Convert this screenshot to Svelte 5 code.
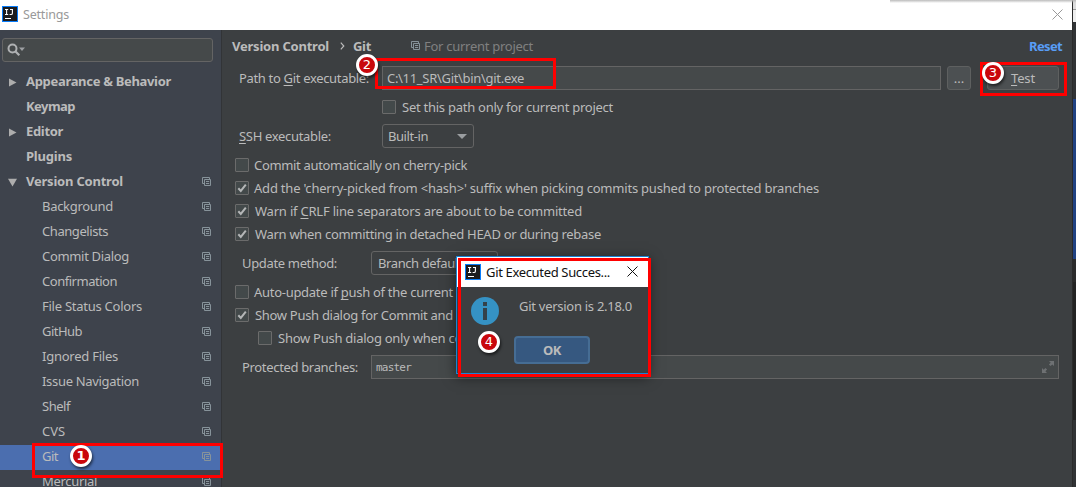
<script>
  const tree = [
    { label: 'Appearance & Behavior', w: 145, top: true, arrow: 'right' },
    { label: 'Keymap', w: 49, top: true },
    { label: 'Editor', w: 37, top: true, arrow: 'right' },
    { label: 'Plugins', w: 46, top: true },
    { label: 'Version Control', w: 97, top: true, arrow: 'down', copy: true },
    { label: 'Background', w: 71, copy: true },
    { label: 'Changelists', w: 66, copy: true },
    { label: 'Commit Dialog', w: 87, copy: true },
    { label: 'Confirmation', w: 75, copy: true },
    { label: 'File Status Colors', w: 100, copy: true },
    { label: 'GitHub', w: 40, copy: true },
    { label: 'Ignored Files', w: 76, copy: true },
    { label: 'Issue Navigation', w: 97, copy: true },
    { label: 'Shelf', w: 28, copy: true },
    { label: 'CVS', w: 23, copy: true },
    { label: 'Git', w: 16, copy: true, selected: true },
    { label: 'Mercurial', w: 55, copy: true }
  ];

  // Spreads the letters of a label so that it takes the given width.
  function fit(node, width) {
    const n = node.textContent.length;
    const natural = node.getBoundingClientRect().width;
    node.style.letterSpacing = `${(width - natural) / n}px`;
  }
</script>

{#snippet copyIcon()}
  <svg class="copy" width="10" height="10" viewBox="0 0 10 10" fill="none" stroke="currentColor">
    <path d="M2.5 6.5H.5V.5H7.5V2" />
    <path d="M2.5 2.5H8.5V8.5H2.5ZM4 4.5H7.2M4 6.5H7.2" />
  </svg>
{/snippet}

{#snippet logo()}
  <svg class="logo" width="16" height="16" viewBox="0 0 16 16">
    <rect width="16" height="16" fill="#087cfa" />
    <rect x="1" y="1" width="14" height="14" fill="#1b1b1d" />
    <path d="M3 3.5H6.2M4.6 3.5V8.2M3 8.5H6.2M8 3.5H11M10.4 3.5V7.2Q10.4 8.5 9 8.5H7.6M3 12.5H9" fill="none" stroke="#fff" stroke-width="1.1" />
  </svg>
{/snippet}

{#snippet check(on)}
  <span class="check">
    {#if on}
      <svg width="12" height="12" viewBox="0 0 12 12"><path d="M2.3 6.2L4.8 8.9L9.8 2.6" fill="none" stroke="#b4b6b7" stroke-width="2" /></svg>
    {/if}
  </span>
{/snippet}

{#snippet close()}
  <svg class="close" width="11" height="11" viewBox="0 0 11 11"><path d="M.5 .5L10.5 10.5M10.5 .5L.5 10.5" fill="none" stroke="currentColor" /></svg>
{/snippet}

<div class="screen">
  <div class="window">
    <header class="titlebar">
      {@render logo()}
      <span use:fit={46}>Settings</span>
      {@render close()}
    </header>
    <div class="body">
      <aside>
        <div class="search">
          <svg width="20" height="14" viewBox="0 0 20 14">
            <circle cx="5.5" cy="5.5" r="4" fill="none" stroke="#afb1b3" stroke-width="2" />
            <path d="M8.3 8.3L12.3 12.3" stroke="#afb1b3" stroke-width="2.2" />
            <path d="M12 4.5H18L15 8Z" fill="#9da0a3" />
          </svg>
        </div>
        <nav>
          {#each tree as item}
            <div class="item" class:top={item.top} class:selected={item.selected}>
              <span class="arrow">
                {#if item.arrow}
                  <svg width="9" height="9" viewBox="0 0 9 9"><path d={item.arrow === 'right' ? 'M1 .5L8.5 4.5L1 8.5Z' : 'M0 .8H9L4.5 8.6Z'} fill="#adadad" /></svg>
                {/if}
              </span>
              <span class="name" use:fit={item.w}>{item.label}</span>
              {#if item.copy}{@render copyIcon()}{/if}
            </div>
          {/each}
        </nav>
      </aside>
      <main>
        <div class="crumbs">
          <b use:fit={97}>Version Control</b>
          <svg class="sep" width="5" height="8" viewBox="0 0 5 8"><path d="M.8 .6L3.8 4L.8 7.4" fill="none" stroke="#bbb" stroke-width="1.2" /></svg>
          <b use:fit={18}>Git</b>
          <span class="scope">{@render copyIcon()}<span use:fit={109}>For current project</span></span>
          <b class="reset" use:fit={33}>Reset</b>
        </div>
        <div class="row path">
          <span class="label"><span use:fit={130}>Path to <u>G</u>it executable:</span></span>
          <div class="field"><span use:fit={137}>C:\11_SR\Git\bin\git.exe</span></div>
          <div class="button dots">...</div>
          <div class="button test"><span use:fit={24}><u>T</u>est</span></div>
        </div>
        <div class="option current">{@render check(false)}<span use:fit={211}>Set this path only for current project</span></div>
        <div class="row ssh">
          <span class="label"><span use:fit={92}><u>S</u>SH executable:</span></span>
          <div class="select"><span use:fit={40}>Built-in</span><i></i></div>
        </div>
        <div class="group">
          <div class="option">{@render check(false)}<span use:fit={213}>Commit automatically on cherry-pick</span></div>
          <div class="option">{@render check(true)}<span use:fit={565}>Add the 'cherry-picked from &lt;hash&gt;' suffix when picking commits pushed to protected branches</span></div>
          <div class="option w">{@render check(true)}<span use:fit={327}>Warn if <u>C</u>RLF line separators are about to be committed</span></div>
          <div class="option w">{@render check(true)}<span use:fit={346}>Warn when committing in detached HEAD or during rebase</span></div>
        </div>
        <div class="row update">
          <span class="label"><span use:fit={95}>Update method:</span></span>
          <div class="select"><span use:fit={84}>Branch default</span></div>
        </div>
        <div class="group">
          <div class="option">{@render check(false)}<span use:fit={199}>Auto-update if <u>p</u>ush of the current</span></div>
          <div class="option w">{@render check(true)}<span use:fit={198}>Show Push dialog for Commit and</span></div>
          <div class="option nested">{@render check(false)}<span use:fit={184}>Show Push dialog only when co</span></div>
        </div>
        <div class="row protected">
          <span class="label"><span use:fit={116}>Protected branches:</span></span>
          <div class="field">
            <span class="mono" use:fit={35}>master</span>
            <svg width="12" height="12" viewBox="0 0 12 12" fill="#6e7173"><path d="M7 0H12V5L10.3 3.4L8.6 5.1L6.9 3.4L8.7 1.8ZM0 7L1.7 8.7L3.4 6.9L5.1 8.6L3.4 10.3L5 12H0Z" /></svg>
          </div>
        </div>
      </main>
    </div>
  </div>
  <div class="behind"><i></i></div>
  <div class="shade"></div>

  <section class="dialog">
    <header>
      {@render logo()}
      <span use:fit={124}>Git Executed Succes...</span>
      {@render close()}
    </header>
    <div class="message">
      <svg width="28" height="28" viewBox="0 0 28 28">
        <circle cx="14" cy="14" r="14" fill="#3592c4" />
        <path d="M12 5H16V9H12ZM12 11H16V23H12Z" fill="#344149" />
      </svg>
      <span use:fit={113}>Git version is 2.18.0</span>
    </div>
    <div class="ok"><span use:fit={18}>OK</span></div>
  </section>

  <div class="mark m1"></div>
  <div class="mark m2"></div>
  <div class="mark m3"></div>
  <div class="mark m4"></div>
  <div class="badge b1">1</div>
  <div class="badge b2">2</div>
  <div class="badge b3">3</div>
  <div class="badge b4">4</div>
</div>

<style>
  :global(body) { margin: 0; overflow: hidden; }
  * { box-sizing: border-box; }
  .screen {
    position: relative;
    display: flex;
    width: 1076px;
    height: 487px;
    overflow: hidden;
    font: 13px/18px "Noto Sans", sans-serif;
    color: #bbb;
    white-space: nowrap;
  }
  svg { display: block; flex: none; }
  u { text-underline-offset: 2px; text-decoration-thickness: 1px; text-decoration-skip-ink: none; }
  .window { width: 1072px; display: flex; flex-direction: column; }
  .titlebar { height: 30px; background: #fff; color: #999; display: flex; align-items: center; padding: 0 9px 0 2px; font-size: 12.5px; }
  .titlebar span { margin-left: 5px; }
  .titlebar .logo { margin-top: -2px; }
  .close { margin-left: auto; }
  .titlebar .close { margin-top: -2px; }
  .body { flex: 1; display: flex; min-height: 0; }
  aside { width: 222px; background: #3e434c; border-right: 1px solid #323437; overflow: hidden; flex: none; }
  .search { margin: 8px 8px 8px 2px; height: 24px; border: 1px solid #646464; border-radius: 3px; background: #45494a; padding: 4px; }
  .item { height: 25px; display: flex; align-items: center; padding-right: 9px; padding-left: 42px; }
  .item.top { padding-left: 8px; font-weight: 700; }
  .item .name { padding-bottom: 3px; }
  .item .arrow { display: none; }
  .item.top .arrow { display: block; width: 18px; padding-bottom: 1px; }
  .item .copy { margin: 0 0 1px auto; }
  .copy { color: #87939a; }
  .item.selected { background: linear-gradient(90deg, #4b6eaf 220px, #3e434c 220px); }

  main { flex: 1; background: #3c3f41; min-width: 0; }
  .crumbs { height: 33px; display: flex; align-items: center; padding: 0 10px 2px; }
  .sep { margin: 0 8px 0 11px; }
  .scope { display: flex; align-items: center; gap: 3px; margin-left: 40px; color: #808080; }
  .reset { margin-left: auto; color: #589df6; }
  .row { display: flex; align-items: center; }
  .label { width: 143px; }
  .path { height: 30px; padding-left: 17px; }
  .field { height: 24px; border: 1px solid #646464; background: #45494a; display: flex; align-items: center; padding: 0 4px; }
  .path .field { width: 559px; }
  .path .label, .path .field span, .update .label, .protected .label { padding-bottom: 1px; }
  .button { height: 24px; border: 1px solid #5e6060; border-radius: 3px; background: #4c5052; display: flex; justify-content: center; align-items: center; }
  .dots { width: 24px; margin-left: 6px; }
  .test { width: 72px; margin-left: 16px; }
  .option { height: 23px; padding: 5px 0 0 13px; display: flex; align-items: flex-start; gap: 5px; }
  .option > span:last-child { margin-top: -2px; }
  .option.w { gap: 6px; }
  .option.nested { padding-left: 36px; gap: 6px; }
  .current { height: 29px; padding: 7px 0 0 160px; gap: 6px; }
  .check { width: 14px; height: 14px; border: 1px solid #6b6b6b; border-radius: 1px; background: #43494a; flex: none; }
  .ssh { height: 28px; padding-left: 17px; }
  .ssh .label { padding-bottom: 1px; }
  .select { height: 24px; width: 92px; border: 1px solid #646464; border-radius: 3px; display: flex; align-items: center; justify-content: space-between; padding: 0 6px 0 5px; }
  .select i { border: 5px solid transparent; border-top-color: #9a9da0; border-bottom: 0; }
  .group { padding-top: 3px; }
  .update { height: 34px; padding-left: 20px; margin-top: 1px; }
  .update .label, .protected .label { width: 129px; }
  .update .select { width: 127px; padding-left: 6px; }
  .update + .group { padding-top: 0; }
  .protected { height: 34px; padding-left: 20px; margin-top: 1px; }
  .protected .field { width: 688px; justify-content: space-between; }
  .mono { font: 11px "DejaVu Sans Mono", monospace; }

  .behind { width: 4px; background: linear-gradient(#ddd 0 9px, #999 9px 10px, #eee 10px 22px, #313335 22px 258px, #2b2b2b 258px 282px, #232323 282px 420px, #313335 420px); padding-top: 99px; border-left: 1px solid #2b2b2b; }
  .behind i { display: block; height: 160px; background: #214283; }
  .shade { position: absolute; left: 890px; top: 0; width: 186px; height: 3px; background: linear-gradient(#bbb, #fff0); }

  .dialog { position: absolute; left: 456px; top: 256px; width: 193px; height: 118px; border: 1px solid #1883d7; background: #3c3f41; box-shadow: 0 3px 12px #0008; }
  .dialog header { height: 30px; background: #fff; color: #111; display: flex; align-items: center; padding: 0 10px 1px 8px; }
  .dialog header span { margin-left: 5px; }
  .message { display: flex; padding: 10px 0 0 14px; gap: 20px; }
  .ok { margin: 11px 0 0 57px; width: 76px; height: 28px; border: 2px solid #466d94; border-radius: 4px; background: #365880; display: flex; align-items: center; justify-content: center; font-weight: 700; }

  .mark { position: absolute; border: 3px solid #f00; }
  .m1 { left: 32px; top: 443px; width: 191px; height: 35px; }
  .m2 { left: 375px; top: 58px; width: 181px; height: 31px; }
  .m3 { left: 980px; top: 62px; width: 87px; height: 34px; }
  .m4 { left: 458px; top: 258px; width: 193px; height: 119px; }
  .badge { position: absolute; width: 22px; height: 22px; border: 3px solid #fff; border-radius: 50%; background: #c9070c; color: #fff; font: 13px/16px "DejaVu Sans", sans-serif; text-align: center; box-shadow: 1px 2px 3px #0009; }
  .b1 { left: 70px; top: 445px; font-weight: 700; }
  .b2 { left: 356px; top: 54px; }
  .b3 { left: 982px; top: 62px; }
  .b4 { left: 478px; top: 331px; }
</style>
